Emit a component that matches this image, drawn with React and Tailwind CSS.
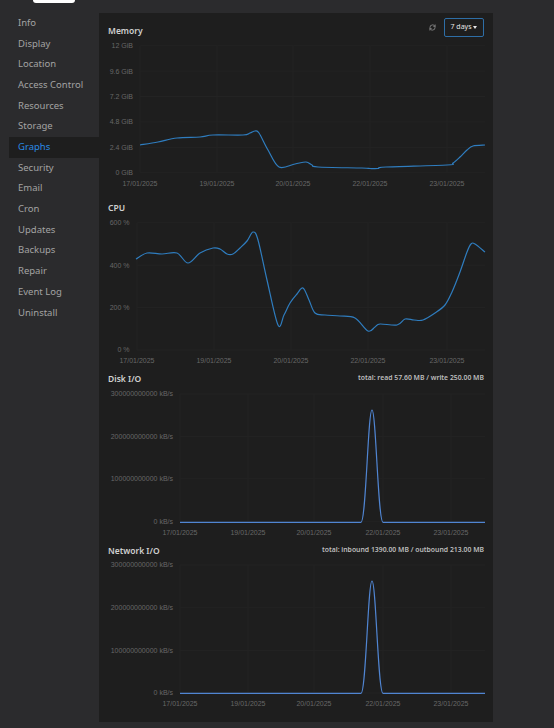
import React from "react";
import { RefreshCw } from "lucide-react";

const items = ["Info","Display","Location","Access Control","Resources","Storage","Graphs","Security","Email","Cron","Updates","Backups","Repair","Event Log","Uninstall"];

function smooth(pts) {
  let d = `M${pts[0][0]} ${pts[0][1]}`;
  for (let i = 0; i < pts.length - 1; i++) {
    const p0 = pts[i - 1] || pts[i];
    const p1 = pts[i];
    const p2 = pts[i + 1];
    const p3 = pts[i + 2] || p2;
    const c1x = p1[0] + (p2[0] - p0[0]) / 6;
    const c1y = p1[1] + (p2[1] - p0[1]) / 6;
    const c2x = p2[0] - (p3[0] - p1[0]) / 6;
    const c2y = p2[1] - (p3[1] - p1[1]) / 6;
    d += ` C${c1x.toFixed(2)} ${c1y.toFixed(2)} ${c2x.toFixed(2)} ${c2y.toFixed(2)} ${p2[0]} ${p2[1]}`;
  }
  return d;
}

const memPts = [[140,145],[158,142],[177,138],[200,137],[213,135],[243,135],[250,133],[255,131],[259,133],[268,150],[279,167],[295,164],[306,162],[312,165],[318,167],[362,168],[370,168.5],[378,168.5],[386,167],[447,165],[453,163],[460,157],[467,150],[473,146],[485,145]];
const cpuPts = [[136,259],[147,253],[162,254],[177,253],[188,263],[200,253],[213,248],[220,249],[227,254],[233,254],[240,248],[247,241],[253,232],[258,240],[267,280],[278,325],[284,315],[290,303],[297,294],[303,288],[309,300],[315,313],[325,315],[340,316],[355,318],[368,331],[375,327],[380,324],[397,325],[405,319],[414,320],[423,320],[435,313],[445,305],[452,292],[460,272],[467,252],[471,244],[475,244],[485,252]];

function Chart({ top, height, left, right, yTicks, xTicks, xLabelY, labelEnd, line, color }) {
  return (
    <svg width="394" height={height} viewBox={`99 ${top} 394 ${height}`} className="block">
      {yTicks.map(([t, y]) => (
        <g key={t}>
          <line x1={left} x2={right} y1={y} y2={y} stroke="#242424" strokeWidth="0.8" />
          <text x={labelEnd} y={y + 2.4} textAnchor="end" fontSize="7" fill="#676767" fontFamily="'Liberation Sans', Arial, sans-serif">{t}</text>
        </g>
      ))}
      {xTicks.map(([t, x]) => (
        <g key={t}>
          <line x1={x} x2={x} y1={yTicks[0][1]} y2={yTicks[yTicks.length - 1][1]} stroke="#242424" strokeWidth="0.8" />
          <text x={x} y={xLabelY + 2.4} textAnchor="middle" fontSize="7" fill="#676767" fontFamily="'Liberation Sans', Arial, sans-serif">{t}</text>
        </g>
      ))}
      <path d={line} fill="none" stroke={color} strokeWidth="1.2" strokeLinejoin="round" />
    </svg>
  );
}

function spike(base, peak) {
  return `M180 ${base} L361 ${base} C366 ${base} 368 ${peak} 372 ${peak} C376 ${peak} 378 ${base} 383 ${base} L485 ${base}`;
}

export default function App() {
  const font = { fontFamily: "'Noto Sans', 'Open Sans', sans-serif" };
  return (
    <div className="w-[554px] h-[728px] bg-[#2b2b2d] overflow-hidden" style={font}>
      <div className="h-[3px] flex">
        <div className="ml-[33px] w-[42px] h-[3px] bg-white rounded-b-[8px]" />
      </div>
      <div className="flex items-start">
        <nav className="w-[99px] pl-[9px] pt-[9.7px] flex flex-col">
          {items.map((it) => (
            <div
              key={it}
              className={`h-[20.7px] flex items-center pl-[9px] text-[9.5px] ${it === "Graphs" ? "bg-[#1e1e1e] text-[#2a8ae4]" : "text-[#a3a3a3]"}`}
            >
              {it}
            </div>
          ))}
        </nav>
        <main className="mt-[10px] w-[394px] bg-[#1e1e1e] pt-[5px] pb-[12px] flex flex-col">
          <div className="flex items-start justify-between px-[9px] h-[19px]">
            <div className="mt-[7px] leading-[12px] text-[8.5px] font-semibold text-[#d0d0d0]">Memory</div>
            <div className="flex items-center gap-[8px]">
              <RefreshCw size={7} color="#9a9a9a" strokeWidth={2.5} />
              <div className="h-[19px] w-[40px] border border-[#2e6ea6] rounded-[2px] flex items-center justify-center gap-[2px] text-[7px] text-[#e6e6e6]">
                <span>7 days</span>
                <span className="w-0 h-0 border-l-[2.5px] border-r-[2.5px] border-t-[3px] border-l-transparent border-r-transparent border-t-[#e6e6e6]" />
              </div>
            </div>
          </div>
          <Chart
            top={37} height={153} left={140} right={485} labelEnd={133}
            yTicks={[["12 GiB",45.7],["9.6 GiB",71.1],["7.2 GiB",96.5],["4.8 GiB",121.9],["2.4 GiB",147.3],["0 GiB",172.7]]}
            xTicks={[["17/01/2025",140],["19/01/2025",217],["20/01/2025",293],["22/01/2025",370],["23/01/2025",447]]}
            xLabelY={183.5} line={smooth(memPts)} color="#2f7dbf"
          />
          <div className="h-[24px] flex items-end px-[9px]">
            <div className="leading-[12px] text-[8.5px] font-semibold text-[#d0d0d0]">CPU</div>
          </div>
          <Chart
            top={214} height={153} left={137} right={485} labelEnd={129.5}
            yTicks={[["600 %",222.7],["400 %",265.2],["200 %",307.6],["0 %",350]]}
            xTicks={[["17/01/2025",137],["19/01/2025",214],["20/01/2025",291],["22/01/2025",368],["23/01/2025",447]]}
            xLabelY={360.7} line={smooth(cpuPts)} color="#2f7dbf"
          />
          <div className="h-[18px] flex items-end justify-between px-[9px]">
            <div className="leading-[12px] text-[8.5px] font-semibold text-[#d0d0d0]">Disk I/O</div>
            <div className="leading-[12px] pb-[1px] text-[6.85px] font-semibold text-[#bdbdbd]">total: read 57.60 MB / write 250.00 MB</div>
          </div>
          <Chart
            top={385} height={153} left={180} right={485} labelEnd={173}
            yTicks={[["300000000000 kB/s",394],["200000000000 kB/s",436.3],["100000000000 kB/s",478.7],["0 kB/s",521.7]]}
            xTicks={[["17/01/2025",180],["19/01/2025",248],["20/01/2025",314],["22/01/2025",383],["23/01/2025",451]]}
            xLabelY={532.3} line={spike(522.3, 410)} color="#5085d2"
          />
          <div className="h-[19px] flex items-end justify-between px-[9px]">
            <div className="leading-[12px] text-[8.5px] font-semibold text-[#d0d0d0]">Network I/O</div>
            <div className="leading-[12px] pb-[1px] text-[6.85px] font-semibold text-[#bdbdbd]">total: inbound 1390.00 MB / outbound 213.00 MB</div>
          </div>
          <Chart
            top={557} height={153} left={180} right={485} labelEnd={173}
            yTicks={[["300000000000 kB/s",565],["200000000000 kB/s",607.7],["100000000000 kB/s",650.3],["0 kB/s",693]]}
            xTicks={[["17/01/2025",180],["19/01/2025",248],["20/01/2025",314],["22/01/2025",383],["23/01/2025",451]]}
            xLabelY={704} line={spike(693.3, 581)} color="#5085d2"
          />
        </main>
      </div>
    </div>
  );
}
